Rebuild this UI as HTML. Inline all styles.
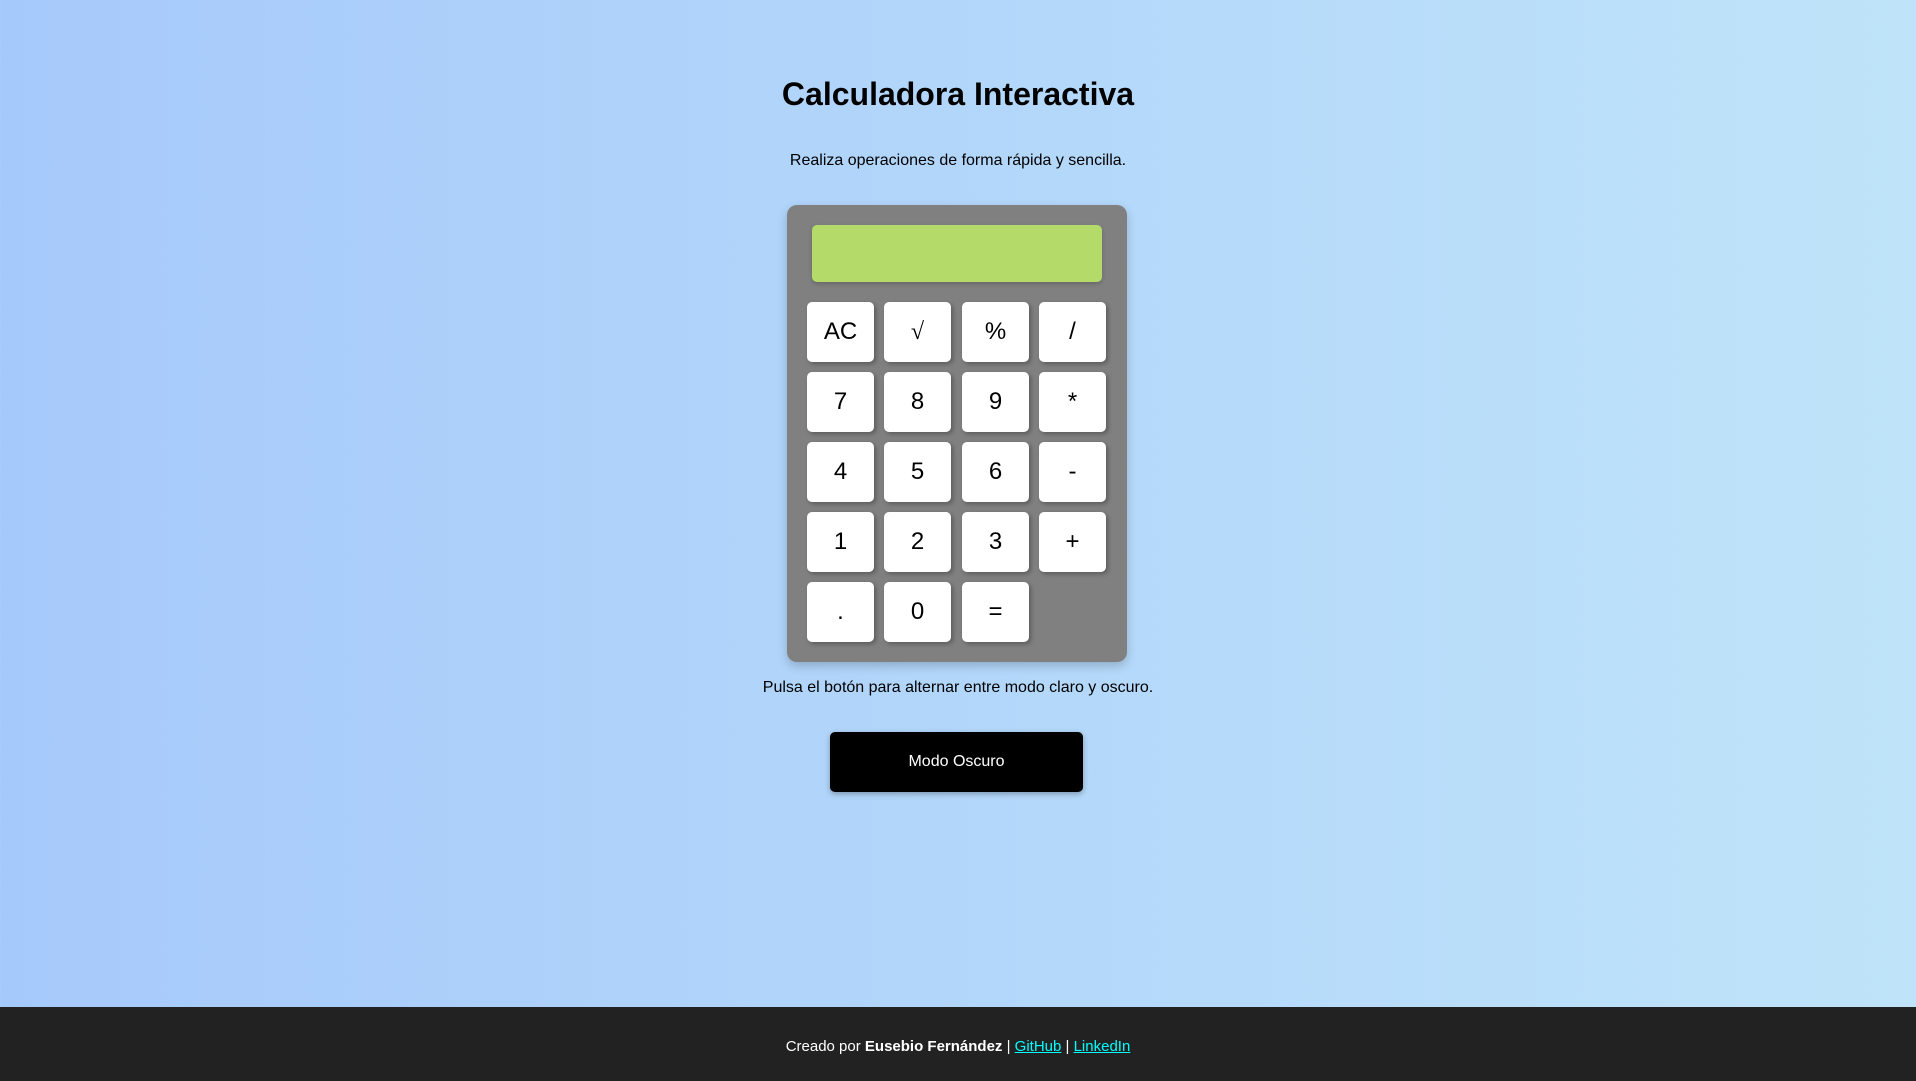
<!DOCTYPE html>
<html><head><meta charset="utf-8"><style>
*{box-sizing:border-box;margin:0;padding:0}
html,body{width:1916px;height:1081px;overflow:hidden}
body{font-family:"Liberation Sans",Arial,sans-serif;background:linear-gradient(90deg,#a6c9fb,#bfe4f9);position:relative}
h1{position:absolute;top:76px;left:0;width:100%;text-align:center;font-size:32px;font-weight:bold;color:#000}
.sub{position:absolute;top:152px;left:0;width:100%;text-align:center;font-size:16px}
.calc{position:absolute;left:787px;top:205px;width:340px;height:457px;background:#808080;border-radius:10px;box-shadow:0 4px 10px rgba(0,0,0,.2)}
.disp{position:absolute;left:25px;top:20px;width:290px;height:57px;background:#b4db6a;border-radius:5px;box-shadow:0 2px 4px rgba(0,0,0,.2)}
.b{position:absolute;width:67px;height:60px;background:#fff;border-radius:5px;box-shadow:2px 2px 5px rgba(0,0,0,.3);font-size:24px;display:flex;align-items:center;justify-content:center;color:#000}
.pulsa{position:absolute;top:679px;left:0;width:100%;text-align:center;font-size:16px}
.mode{position:absolute;left:830px;top:732px;width:253px;height:60px;background:#000;color:#fff;border-radius:5px;font-size:16px;display:flex;align-items:center;justify-content:center;box-shadow:0 2px 6px rgba(0,0,0,.3)}
footer{position:absolute;left:0;top:1007px;width:100%;height:74px;background:#222;color:#fff;text-align:center;font-size:15px;line-height:80px}
footer a{color:#0ff;text-decoration:underline}
</style></head><body>
<h1>Calculadora Interactiva</h1>
<div class="sub">Realiza operaciones de forma rápida y sencilla.</div>
<div class="calc">
<div class="disp"></div>
<div class="b" style="left:20px;top:97px">AC</div>
<div class="b" style="left:97px;top:97px;font-family:'Liberation Serif',serif">√</div>
<div class="b" style="left:175px;top:97px">%</div>
<div class="b" style="left:252px;top:97px">/</div>
<div class="b" style="left:20px;top:167px">7</div>
<div class="b" style="left:97px;top:167px">8</div>
<div class="b" style="left:175px;top:167px">9</div>
<div class="b" style="left:252px;top:167px">*</div>
<div class="b" style="left:20px;top:237px">4</div>
<div class="b" style="left:97px;top:237px">5</div>
<div class="b" style="left:175px;top:237px">6</div>
<div class="b" style="left:252px;top:237px">-</div>
<div class="b" style="left:20px;top:307px">1</div>
<div class="b" style="left:97px;top:307px">2</div>
<div class="b" style="left:175px;top:307px">3</div>
<div class="b" style="left:252px;top:307px">+</div>
<div class="b" style="left:20px;top:377px">.</div>
<div class="b" style="left:97px;top:377px">0</div>
<div class="b" style="left:175px;top:377px">=</div>
</div>
<div class="pulsa">Pulsa el botón para alternar entre modo claro y oscuro.</div>
<div class="mode">Modo Oscuro</div>
<footer>Creado por <b>Eusebio Fernández</b> | <a>GitHub</a> | <a>LinkedIn</a></footer>
</body></html>
